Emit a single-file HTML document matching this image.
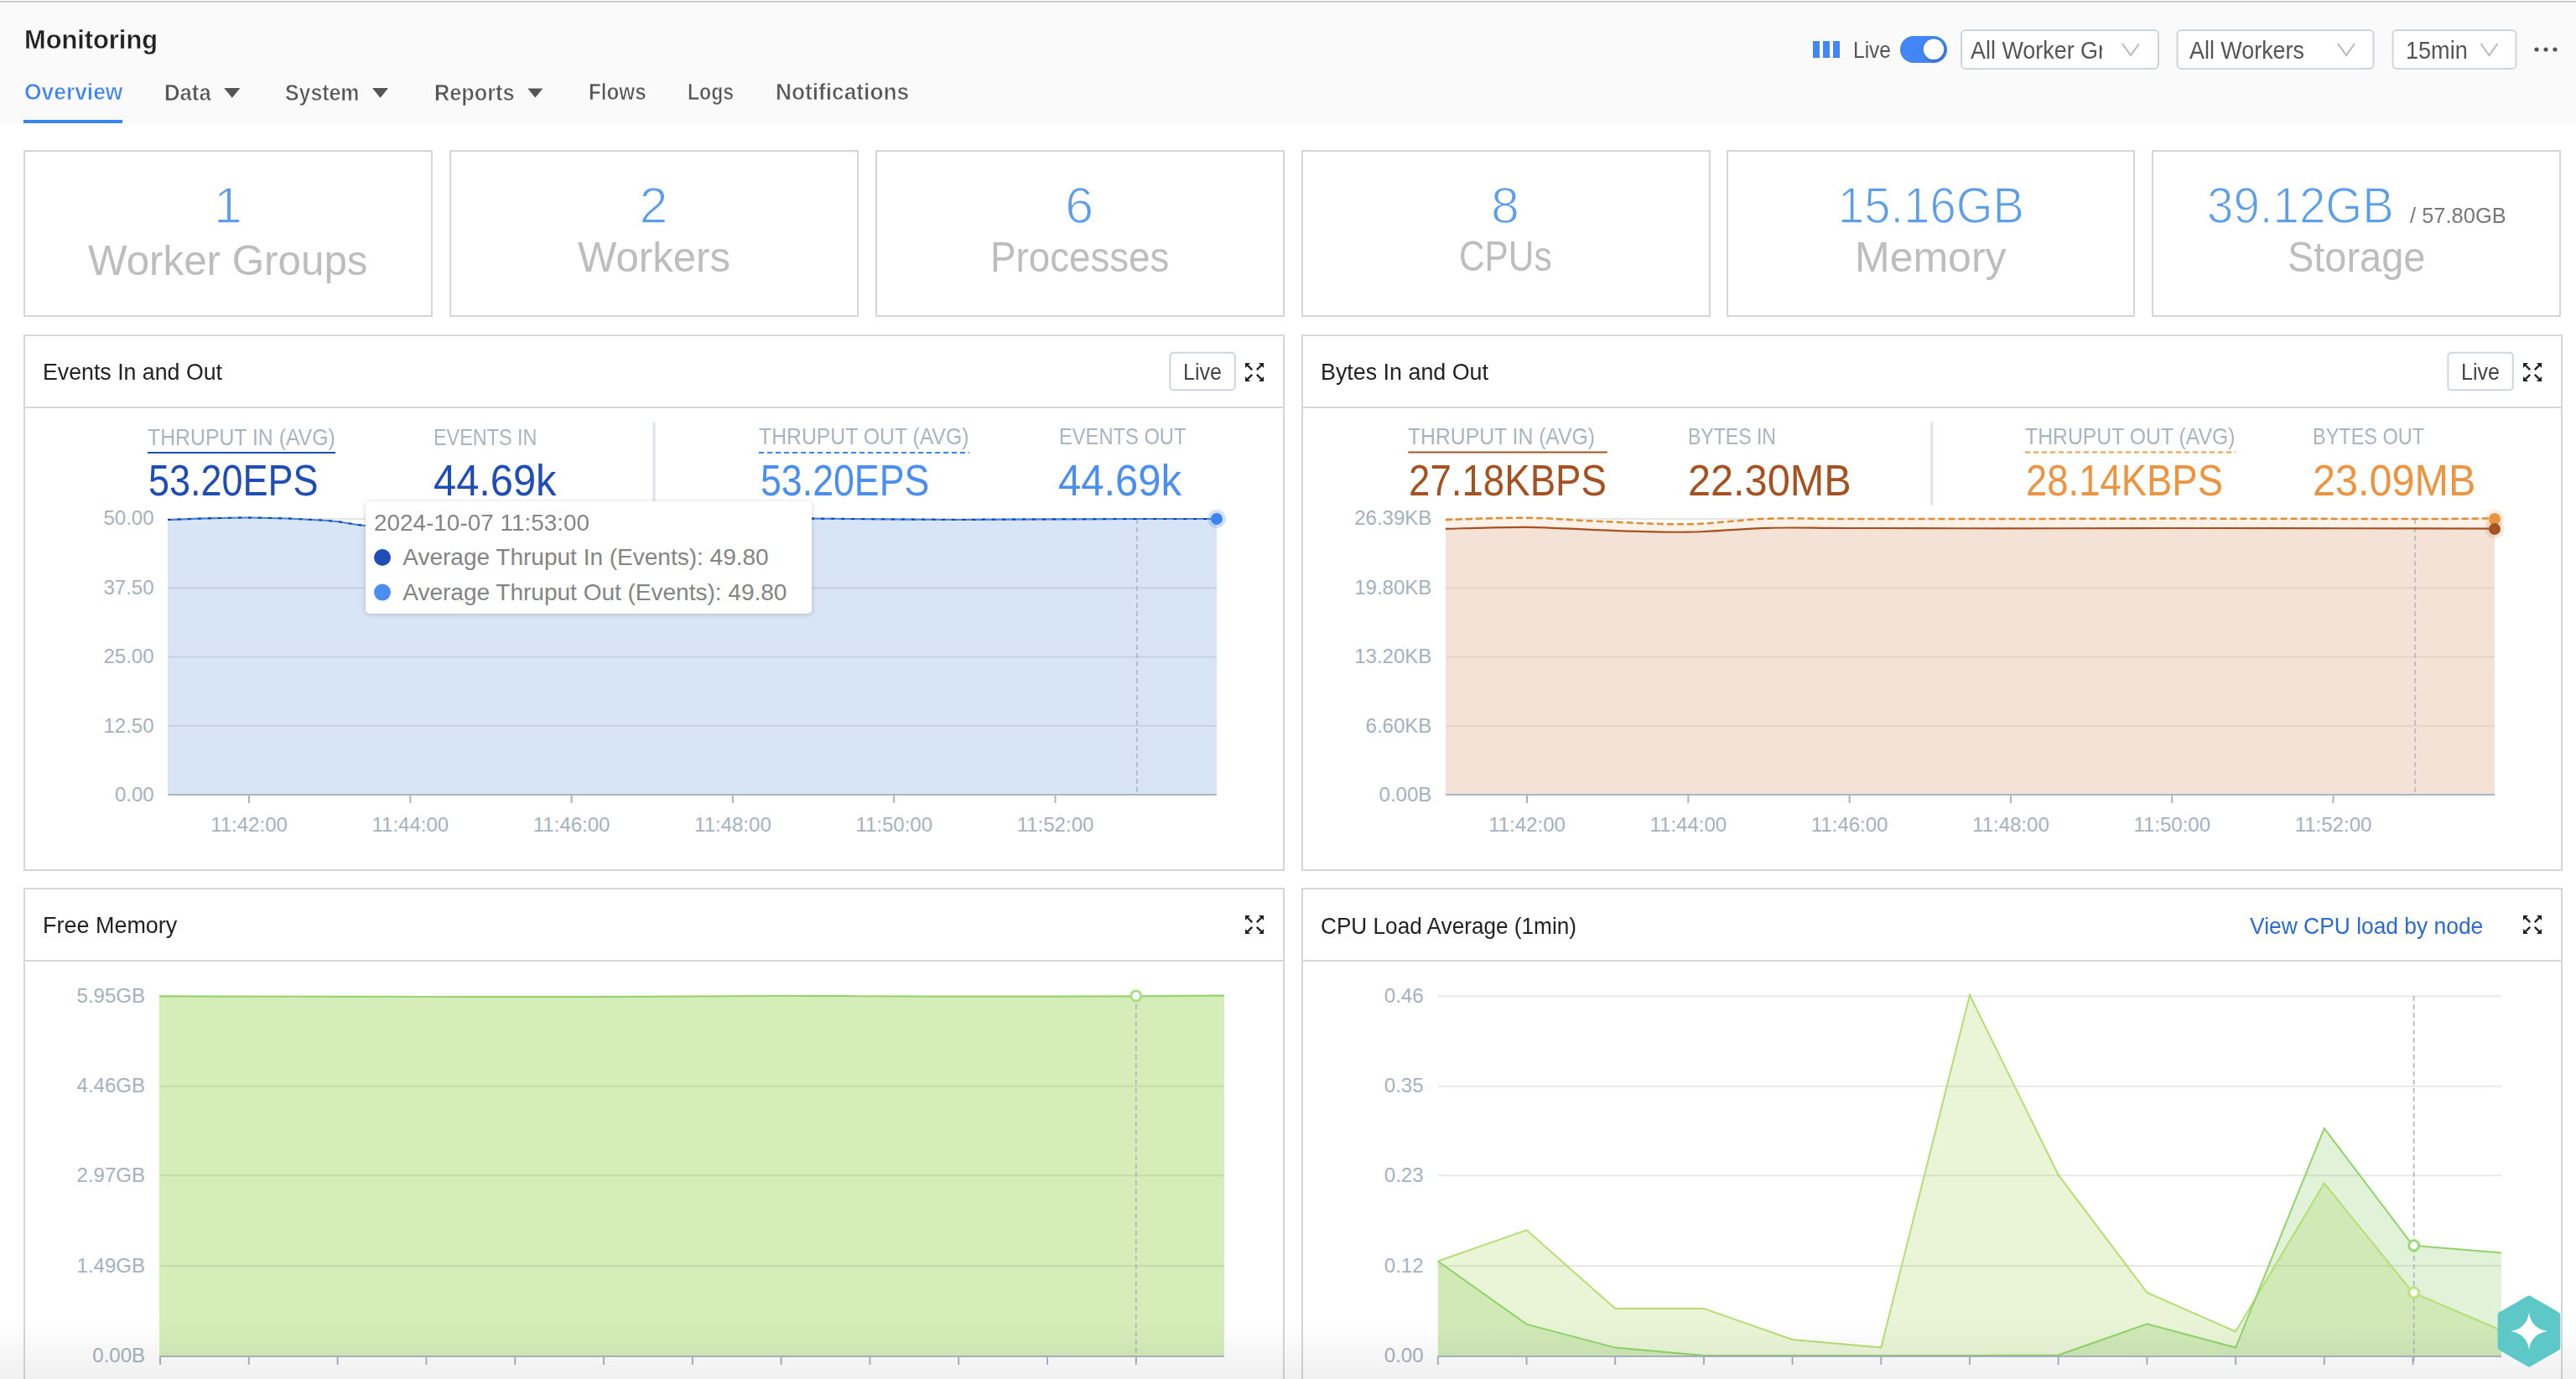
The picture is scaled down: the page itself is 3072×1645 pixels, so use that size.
<!DOCTYPE html>
<html><head><meta charset="utf-8"><title>Monitoring</title>
<style>
html,body{margin:0;padding:0;width:3072px;height:1645px;overflow:hidden;background:#fff}
body{position:relative;font-family:"Liberation Sans",sans-serif}
.s{position:absolute;left:0;top:0}
.t{position:absolute;white-space:pre}
.tip{position:absolute;left:436px;top:598px;width:532px;height:134px;background:#fff;border-radius:5px;box-shadow:0 1px 6px rgba(0,0,0,0.18)}
.fade{position:absolute;left:0;top:1575px;width:3072px;height:70px;background:linear-gradient(to bottom,rgba(0,0,0,0),rgba(0,0,0,0.06))}
</style></head><body>
<svg class="s" width="3072" height="1645" viewBox="0 0 3072 1645"><rect x="0" y="0" width="3072" height="147" fill="#fafafa"/><rect x="0" y="0" width="3072" height="1" fill="#fff"/><rect x="0" y="1" width="3072" height="2" fill="#c9cacc"/><rect x="0" y="3" width="3072" height="1" fill="#fff"/><rect x="28" y="143" width="118" height="4" fill="#3b82f6"/><polygon points="267.2,105 286.4,105 276.79999999999995,116.8" fill="#555"/><polygon points="444,105 463,105 453.5,116.8" fill="#555"/><polygon points="629.3,105.5 647.4,105.5 638.3499999999999,116.4" fill="#555"/><rect x="2162" y="49" width="8" height="20" fill="#4285f4"/><rect x="2174" y="49" width="8" height="20" fill="#4285f4"/><rect x="2186" y="49" width="8" height="20" fill="#4285f4"/><rect x="2266" y="43" width="56" height="32" rx="16" fill="#4285f4"/><defs><filter id="ks" x="-50%" y="-50%" width="200%" height="200%"><feDropShadow dx="1.5" dy="2" stdDeviation="2" flood-color="#000" flood-opacity="0.25"/></filter></defs><circle cx="2306" cy="58.8" r="12.2" fill="#fff" filter="url(#ks)"/><rect x="2339" y="36" width="235" height="46" rx="5" fill="#fff" stroke="#ccd5de" stroke-width="2"/><rect x="2596.5" y="36" width="234" height="46" rx="5" fill="#fff" stroke="#ccd5de" stroke-width="2"/><rect x="2853.5" y="36" width="147" height="46" rx="5" fill="#fff" stroke="#ccd5de" stroke-width="2"/><polyline points="2531,52 2541,66 2551,52" fill="none" stroke="#b8b8b8" stroke-width="2"/><polyline points="2788,52 2798,66 2808,52" fill="none" stroke="#b8b8b8" stroke-width="2"/><polyline points="2958.5,52 2968.5,66 2978.5,52" fill="none" stroke="#b8b8b8" stroke-width="2"/><circle cx="3025" cy="59" r="2.6" fill="#555"/><circle cx="3036" cy="59" r="2.6" fill="#555"/><circle cx="3047" cy="59" r="2.6" fill="#555"/><rect x="29" y="180" width="486" height="197" fill="#fff" stroke="#d6d6d6" stroke-width="2"/><rect x="537" y="180" width="486" height="197" fill="#fff" stroke="#d6d6d6" stroke-width="2"/><rect x="1045" y="180" width="486" height="197" fill="#fff" stroke="#d6d6d6" stroke-width="2"/><rect x="1553" y="180" width="486" height="197" fill="#fff" stroke="#d6d6d6" stroke-width="2"/><rect x="2060" y="180" width="485" height="197" fill="#fff" stroke="#d6d6d6" stroke-width="2"/><rect x="2567" y="180" width="486" height="197" fill="#fff" stroke="#d6d6d6" stroke-width="2"/><rect x="29" y="400" width="1502" height="638" fill="#fff" stroke="#d6d6d6" stroke-width="2"/><rect x="28" y="485" width="1504" height="2" fill="#d6d6d6"/><rect x="1553" y="400" width="1502" height="638" fill="#fff" stroke="#d6d6d6" stroke-width="2"/><rect x="1552" y="485" width="1504" height="2" fill="#d6d6d6"/><rect x="29" y="1060" width="1502" height="698" fill="#fff" stroke="#d6d6d6" stroke-width="2"/><rect x="28" y="1145" width="1504" height="2" fill="#d6d6d6"/><rect x="1553" y="1060" width="1502" height="698" fill="#fff" stroke="#d6d6d6" stroke-width="2"/><rect x="1552" y="1145" width="1504" height="2" fill="#d6d6d6"/><g transform="translate(1485,433)" fill="#222" stroke="#222"><path d="M0 0 L6 0 L0 6 Z" stroke="none"/><path d="M22 0 L16 0 L22 6 Z" stroke="none"/><path d="M0 22 L6 22 L0 16 Z" stroke="none"/><path d="M22 22 L16 22 L22 16 Z" stroke="none"/><path d="M2.5 2.5 L8.2 8.2 M19.5 2.5 L13.8 8.2 M2.5 19.5 L8.2 13.8 M19.5 19.5 L13.8 13.8" stroke-width="2.4" fill="none"/></g><g transform="translate(3009,433)" fill="#222" stroke="#222"><path d="M0 0 L6 0 L0 6 Z" stroke="none"/><path d="M22 0 L16 0 L22 6 Z" stroke="none"/><path d="M0 22 L6 22 L0 16 Z" stroke="none"/><path d="M22 22 L16 22 L22 16 Z" stroke="none"/><path d="M2.5 2.5 L8.2 8.2 M19.5 2.5 L13.8 8.2 M2.5 19.5 L8.2 13.8 M19.5 19.5 L13.8 13.8" stroke-width="2.4" fill="none"/></g><g transform="translate(1485,1092)" fill="#222" stroke="#222"><path d="M0 0 L6 0 L0 6 Z" stroke="none"/><path d="M22 0 L16 0 L22 6 Z" stroke="none"/><path d="M0 22 L6 22 L0 16 Z" stroke="none"/><path d="M22 22 L16 22 L22 16 Z" stroke="none"/><path d="M2.5 2.5 L8.2 8.2 M19.5 2.5 L13.8 8.2 M2.5 19.5 L8.2 13.8 M19.5 19.5 L13.8 13.8" stroke-width="2.4" fill="none"/></g><g transform="translate(3009,1092)" fill="#222" stroke="#222"><path d="M0 0 L6 0 L0 6 Z" stroke="none"/><path d="M22 0 L16 0 L22 6 Z" stroke="none"/><path d="M0 22 L6 22 L0 16 Z" stroke="none"/><path d="M22 22 L16 22 L22 16 Z" stroke="none"/><path d="M2.5 2.5 L8.2 8.2 M19.5 2.5 L13.8 8.2 M2.5 19.5 L8.2 13.8 M19.5 19.5 L13.8 13.8" stroke-width="2.4" fill="none"/></g><rect x="1395.3" y="420.7" width="77.4" height="44.6" rx="4" fill="#fff" stroke="#ccd5de" stroke-width="2"/><rect x="2919.4" y="420.7" width="77.4" height="44.6" rx="4" fill="#fff" stroke="#ccd5de" stroke-width="2"/><rect x="778.5" y="503.5" width="3" height="97" fill="#dde3e9"/><rect x="2302.3" y="503.5" width="3" height="99" fill="#dde3e9"/><rect x="176" y="539" width="224" height="2" fill="#1e4db6"/><line x1="905" y1="540" x2="1156" y2="540" stroke="#3b82f6" stroke-width="2" stroke-dasharray="6 4"/><rect x="1679.3" y="538.5" width="237.4" height="2" fill="#a65121"/><line x1="2415" y1="539.5" x2="2666" y2="539.5" stroke="#ef9a45" stroke-width="2" stroke-dasharray="6 4"/><rect x="200" y="618" width="1251" height="2" fill="#e6e6e6"/><path d="M200.0 620.0 C216.2 619.6 265.3 617.3 297.0 617.5 C328.7 617.7 366.8 619.4 390.0 621.0 C413.2 622.6 419.5 625.8 436.0 627.0 C452.5 628.2 464.2 629.2 489.0 628.0 C513.8 626.8 553.0 621.5 585.0 620.0 C617.0 618.5 633.0 619.2 681.0 619.0 C729.0 618.8 825.2 619.1 873.0 619.0 C920.8 618.9 936.8 618.5 968.0 618.6 C999.2 618.7 1030.5 619.2 1060.0 619.4 C1089.5 619.6 1122.7 620.0 1145.0 620.0 C1167.3 620.0 1158.8 619.9 1194.0 619.7 C1229.2 619.5 1313.2 619.1 1356.0 619.0 C1398.8 618.9 1435.2 619.0 1451.0 619.0 L1451 948 L200 948 Z" fill="#d8e5f7"/><rect x="200" y="700.3" width="1251" height="2" fill="#c7d2e2"/><rect x="200" y="782.6" width="1251" height="2" fill="#c7d2e2"/><rect x="200" y="864.9" width="1251" height="2" fill="#c7d2e2"/><line x1="1356" y1="619" x2="1356" y2="948" stroke="#a9b1bb" stroke-width="1.5" stroke-dasharray="6 4"/><path d="M200.0 620.0 C216.2 619.6 265.3 617.3 297.0 617.5 C328.7 617.7 366.8 619.4 390.0 621.0 C413.2 622.6 419.5 625.8 436.0 627.0 C452.5 628.2 464.2 629.2 489.0 628.0 C513.8 626.8 553.0 621.5 585.0 620.0 C617.0 618.5 633.0 619.2 681.0 619.0 C729.0 618.8 825.2 619.1 873.0 619.0 C920.8 618.9 936.8 618.5 968.0 618.6 C999.2 618.7 1030.5 619.2 1060.0 619.4 C1089.5 619.6 1122.7 620.0 1145.0 620.0 C1167.3 620.0 1158.8 619.9 1194.0 619.7 C1229.2 619.5 1313.2 619.1 1356.0 619.0 C1398.8 618.9 1435.2 619.0 1451.0 619.0" fill="none" stroke="#3d84f0" stroke-width="2.2"/><path d="M200.0 620.0 C216.2 619.6 265.3 617.3 297.0 617.5 C328.7 617.7 366.8 619.4 390.0 621.0 C413.2 622.6 419.5 625.8 436.0 627.0 C452.5 628.2 464.2 629.2 489.0 628.0 C513.8 626.8 553.0 621.5 585.0 620.0 C617.0 618.5 633.0 619.2 681.0 619.0 C729.0 618.8 825.2 619.1 873.0 619.0 C920.8 618.9 936.8 618.5 968.0 618.6 C999.2 618.7 1030.5 619.2 1060.0 619.4 C1089.5 619.6 1122.7 620.0 1145.0 620.0 C1167.3 620.0 1158.8 619.9 1194.0 619.7 C1229.2 619.5 1313.2 619.1 1356.0 619.0 C1398.8 618.9 1435.2 619.0 1451.0 619.0" fill="none" stroke="#1e3f8a" stroke-width="2" stroke-dasharray="4 8"/><rect x="200" y="947" width="1251" height="2" fill="#a9b5c2"/><rect x="296.0" y="948" width="2" height="10" fill="#a9b5c2"/><rect x="488.3" y="948" width="2" height="10" fill="#a9b5c2"/><rect x="680.6" y="948" width="2" height="10" fill="#a9b5c2"/><rect x="872.9" y="948" width="2" height="10" fill="#a9b5c2"/><rect x="1065.2" y="948" width="2" height="10" fill="#a9b5c2"/><rect x="1257.5" y="948" width="2" height="10" fill="#a9b5c2"/><circle cx="1451" cy="619" r="11" fill="#4a8ff0" fill-opacity="0.25"/><circle cx="1451" cy="619" r="7" fill="#3d84f0"/><rect x="1724" y="618" width="1251" height="2" fill="#e6e6e6"/><path d="M1724.0 620.0 C1740.2 619.6 1790.2 617.4 1821.0 617.7 C1851.8 618.0 1877.0 620.8 1909.0 622.0 C1941.0 623.2 1979.8 625.8 2013.0 625.2 C2046.2 624.7 2076.0 619.7 2108.0 618.7 C2140.0 617.7 2156.3 619.0 2205.0 619.0 C2253.7 619.0 2334.2 619.1 2400.0 619.0 C2465.8 618.9 2520.0 618.6 2600.0 618.6 C2680.0 618.6 2817.5 619.0 2880.0 619.0 C2942.5 619.0 2959.2 618.4 2975.0 618.3 L2975 948 L1724 948 Z" fill="#fdf1e8"/><path d="M1724.0 630.8 C1740.2 630.5 1790.2 628.5 1821.0 628.8 C1851.8 629.1 1877.0 631.4 1909.0 632.4 C1941.0 633.4 1979.8 635.1 2013.0 634.7 C2046.2 634.3 2076.0 630.6 2108.0 629.8 C2140.0 629.0 2156.3 629.9 2205.0 630.0 C2253.7 630.1 2334.2 630.3 2400.0 630.3 C2465.8 630.3 2520.0 630.0 2600.0 630.0 C2680.0 630.0 2817.5 630.3 2880.0 630.4 C2942.5 630.5 2959.2 630.7 2975.0 630.7 L2975 948 L1724 948 Z" fill="#f5e2d7"/><rect x="1724" y="700.3" width="1251" height="2" fill="#e6d4c9"/><rect x="1724" y="782.6" width="1251" height="2" fill="#e6d4c9"/><rect x="1724" y="864.9" width="1251" height="2" fill="#e6d4c9"/><line x1="2880" y1="619" x2="2880" y2="948" stroke="#a9b5c2" stroke-width="1.5" stroke-dasharray="6 4"/><path d="M1724.0 620.0 C1740.2 619.6 1790.2 617.4 1821.0 617.7 C1851.8 618.0 1877.0 620.8 1909.0 622.0 C1941.0 623.2 1979.8 625.8 2013.0 625.2 C2046.2 624.7 2076.0 619.7 2108.0 618.7 C2140.0 617.7 2156.3 619.0 2205.0 619.0 C2253.7 619.0 2334.2 619.1 2400.0 619.0 C2465.8 618.9 2520.0 618.6 2600.0 618.6 C2680.0 618.6 2817.5 619.0 2880.0 619.0 C2942.5 619.0 2959.2 618.4 2975.0 618.3" fill="none" stroke="#e28c32" stroke-width="2.5" stroke-dasharray="8 4"/><path d="M1724.0 630.8 C1740.2 630.5 1790.2 628.5 1821.0 628.8 C1851.8 629.1 1877.0 631.4 1909.0 632.4 C1941.0 633.4 1979.8 635.1 2013.0 634.7 C2046.2 634.3 2076.0 630.6 2108.0 629.8 C2140.0 629.0 2156.3 629.9 2205.0 630.0 C2253.7 630.1 2334.2 630.3 2400.0 630.3 C2465.8 630.3 2520.0 630.0 2600.0 630.0 C2680.0 630.0 2817.5 630.3 2880.0 630.4 C2942.5 630.5 2959.2 630.7 2975.0 630.7" fill="none" stroke="#a65121" stroke-width="2.2"/><rect x="1724" y="947" width="1251" height="2" fill="#a9b5c2"/><rect x="1820.0" y="948" width="2" height="10" fill="#a9b5c2"/><rect x="2012.3" y="948" width="2" height="10" fill="#a9b5c2"/><rect x="2204.6" y="948" width="2" height="10" fill="#a9b5c2"/><rect x="2396.9" y="948" width="2" height="10" fill="#a9b5c2"/><rect x="2589.2" y="948" width="2" height="10" fill="#a9b5c2"/><rect x="2781.5" y="948" width="2" height="10" fill="#a9b5c2"/><circle cx="2975" cy="619" r="11.5" fill="#ef9a45" fill-opacity="0.15"/><circle cx="2975" cy="631" r="11.5" fill="#a65121" fill-opacity="0.12"/><circle cx="2975" cy="619" r="7" fill="#ea9440"/><circle cx="2975" cy="631" r="7" fill="#a4541f"/><path d="M190.0 1188.4 C225.0 1188.5 315.0 1188.7 400.0 1188.8 C485.0 1188.9 611.7 1189.3 700.0 1189.2 C788.3 1189.1 863.3 1188.1 930.0 1188.0 C996.7 1187.9 1029.2 1188.5 1100.0 1188.6 C1170.8 1188.7 1295.0 1188.6 1355.0 1188.4 C1415.0 1188.2 1442.5 1187.7 1460.0 1187.6 L1460 1618 L190 1618 Z" fill="#d4edb9"/><rect x="190" y="1294.8" width="1270" height="2" fill="#c3dcae"/><rect x="190" y="1401.2" width="1270" height="2" fill="#c3dcae"/><rect x="190" y="1509.0" width="1270" height="2" fill="#c3dcae"/><line x1="1354.8" y1="1188" x2="1354.8" y2="1628" stroke="#a9b1bb" stroke-width="1.5" stroke-dasharray="6 4"/><path d="M190.0 1188.4 C225.0 1188.5 315.0 1188.7 400.0 1188.8 C485.0 1188.9 611.7 1189.3 700.0 1189.2 C788.3 1189.1 863.3 1188.1 930.0 1188.0 C996.7 1187.9 1029.2 1188.5 1100.0 1188.6 C1170.8 1188.7 1295.0 1188.6 1355.0 1188.4 C1415.0 1188.2 1442.5 1187.7 1460.0 1187.6" fill="none" stroke="#96d46d" stroke-width="2.2"/><rect x="190" y="1617" width="1270" height="2" fill="#a9b5c2"/><rect x="190.0" y="1618" width="2" height="10" fill="#a9b5c2"/><rect x="295.8" y="1618" width="2" height="10" fill="#a9b5c2"/><rect x="401.6" y="1618" width="2" height="10" fill="#a9b5c2"/><rect x="507.4" y="1618" width="2" height="10" fill="#a9b5c2"/><rect x="613.2" y="1618" width="2" height="10" fill="#a9b5c2"/><rect x="719.0" y="1618" width="2" height="10" fill="#a9b5c2"/><rect x="824.8" y="1618" width="2" height="10" fill="#a9b5c2"/><rect x="930.6" y="1618" width="2" height="10" fill="#a9b5c2"/><rect x="1036.4" y="1618" width="2" height="10" fill="#a9b5c2"/><rect x="1142.2" y="1618" width="2" height="10" fill="#a9b5c2"/><rect x="1248.0" y="1618" width="2" height="10" fill="#a9b5c2"/><rect x="1353.8" y="1618" width="2" height="10" fill="#a9b5c2"/><circle cx="1354.8" cy="1188" r="6" fill="#fff" stroke="#a8df7c" stroke-width="3"/><rect x="1714.8" y="1187.4" width="1268.2" height="2" fill="#e8e8e8"/><rect x="1714.8" y="1294.8" width="1268.2" height="2" fill="#e8e8e8"/><rect x="1714.8" y="1401.2" width="1268.2" height="2" fill="#e8e8e8"/><rect x="1714.8" y="1509.0" width="1268.2" height="2" fill="#e8e8e8"/><path d="M1714.8 1504.5 L1820.5 1467.3 L1926.2 1561.0 L2031.9 1561.0 L2137.6 1598.0 L2243.3 1607.5 L2349.0 1187.2 L2454.7 1401.6 L2560.4 1541.9 L2666.1 1588.5 L2771.8 1411.6 L2877.5 1541.9 L2983.0 1587.0 L2983 1618 L1714.8 1618 Z" fill="#96c832" fill-opacity="0.2"/><path d="M1714.8 1504.5 L1820.5 1579.6 L1926.2 1607.6 L2031.9 1617.0 L2137.6 1617.0 L2243.3 1617.0 L2349.0 1617.0 L2454.7 1616.5 L2560.4 1579.4 L2666.1 1607.5 L2771.8 1346.0 L2877.5 1485.8 L2983.0 1494.4 L2983 1618 L1714.8 1618 Z" fill="#69be3c" fill-opacity="0.2"/><line x1="2878.7" y1="1188" x2="2878.7" y2="1628" stroke="#a9b1bb" stroke-width="1.5" stroke-dasharray="6 4"/><path d="M1714.8 1504.5 L1820.5 1467.3 L1926.2 1561.0 L2031.9 1561.0 L2137.6 1598.0 L2243.3 1607.5 L2349.0 1187.2 L2454.7 1401.6 L2560.4 1541.9 L2666.1 1588.5 L2771.8 1411.6 L2877.5 1541.9 L2983.0 1587.0" fill="none" stroke="#b3df72" stroke-width="2"/><path d="M1714.8 1504.5 L1820.5 1579.6 L1926.2 1607.6 L2031.9 1617.0 L2137.6 1617.0 L2243.3 1617.0 L2349.0 1617.0 L2454.7 1616.5 L2560.4 1579.4 L2666.1 1607.5 L2771.8 1346.0 L2877.5 1485.8 L2983.0 1494.4" fill="none" stroke="#8dd568" stroke-width="2"/><rect x="1714.8" y="1617" width="1268.2" height="2" fill="#a9b5c2"/><rect x="1713.8" y="1618" width="2" height="10" fill="#a9b5c2"/><rect x="1819.5" y="1618" width="2" height="10" fill="#a9b5c2"/><rect x="1925.2" y="1618" width="2" height="10" fill="#a9b5c2"/><rect x="2030.9" y="1618" width="2" height="10" fill="#a9b5c2"/><rect x="2136.6" y="1618" width="2" height="10" fill="#a9b5c2"/><rect x="2242.3" y="1618" width="2" height="10" fill="#a9b5c2"/><rect x="2348.0" y="1618" width="2" height="10" fill="#a9b5c2"/><rect x="2453.7" y="1618" width="2" height="10" fill="#a9b5c2"/><rect x="2559.4" y="1618" width="2" height="10" fill="#a9b5c2"/><rect x="2665.1" y="1618" width="2" height="10" fill="#a9b5c2"/><rect x="2770.8" y="1618" width="2" height="10" fill="#a9b5c2"/><rect x="2876.5" y="1618" width="2" height="10" fill="#a9b5c2"/><circle cx="2878.7" cy="1485.8" r="6" fill="#fff" stroke="#9ad96f" stroke-width="3"/><circle cx="2878.7" cy="1541.9" r="6" fill="#fff" stroke="#c0e27f" stroke-width="3"/></svg>
<div class="tip"></div>
<svg class="s" width="3072" height="1645" viewBox="0 0 3072 1645"><circle cx="456" cy="665" r="10" fill="#1e4db6"/><circle cx="456" cy="706.6" r="10" fill="#4a8ff0"/></svg>
<div class="t" style="left:29.0px;top:31.0px;font-size:32px;line-height:32px;color:#222;font-weight:700;transform:scaleX(0.9620);transform-origin:0 0;-webkit-text-stroke:0.4px #fafafa;">Monitoring</div>
<div class="t" style="left:28.5px;top:95.7px;font-size:28px;line-height:28px;color:#3b82f6;font-weight:700;transform:scaleX(0.9427);transform-origin:0 0;-webkit-text-stroke:0.7px #fafafa;">Overview</div>
<div class="t" style="left:196.0px;top:96.8px;font-size:28px;line-height:28px;color:#555;font-weight:700;transform:scaleX(0.9176);transform-origin:0 0;-webkit-text-stroke:0.7px #fafafa;">Data</div>
<div class="t" style="left:340.4px;top:97.0px;font-size:28px;line-height:28px;color:#555;font-weight:700;transform:scaleX(0.8873);transform-origin:0 0;-webkit-text-stroke:0.7px #fafafa;">System</div>
<div class="t" style="left:517.9px;top:97.3px;font-size:28px;line-height:28px;color:#555;font-weight:700;transform:scaleX(0.9027);transform-origin:0 0;-webkit-text-stroke:0.7px #fafafa;">Reports</div>
<div class="t" style="left:701.5px;top:95.7px;font-size:28px;line-height:28px;color:#555;font-weight:700;transform:scaleX(0.8659);transform-origin:0 0;-webkit-text-stroke:0.7px #fafafa;">Flows</div>
<div class="t" style="left:820.3px;top:95.7px;font-size:28px;line-height:28px;color:#555;font-weight:700;transform:scaleX(0.8252);transform-origin:0 0;-webkit-text-stroke:0.7px #fafafa;">Logs</div>
<div class="t" style="left:925.1px;top:95.7px;font-size:28px;line-height:28px;color:#555;font-weight:700;transform:scaleX(0.9383);transform-origin:0 0;-webkit-text-stroke:0.7px #fafafa;">Notifications</div>
<div class="t" style="left:2210.0px;top:45.6px;font-size:27.5px;line-height:27.5px;color:#555;transform:scaleX(0.8919);transform-origin:0 0;">Live</div>
<div class="t" style="left:2350.0px;top:45.4px;font-size:30px;line-height:30px;color:#555;transform:scaleX(0.8971);transform-origin:0 0;width:175.0px;overflow:hidden;">All Worker Gr</div>
<div class="t" style="left:2611.0px;top:45.4px;font-size:30px;line-height:30px;color:#555;transform:scaleX(0.8965);transform-origin:0 0;">All Workers</div>
<div class="t" style="left:2868.8px;top:45.4px;font-size:30px;line-height:30px;color:#555;transform:scaleX(0.9019);transform-origin:0 0;">15min</div>
<div class="t" style="left:254.9px;top:215.0px;font-size:61px;line-height:61px;color:#5b9ee9;-webkit-text-stroke:1.4px #fff;">1</div>
<div class="t" style="left:105.1px;top:286.2px;font-size:50px;line-height:50px;color:#bdbdbd;transform:scaleX(0.9865);transform-origin:0 0;">Worker Groups</div>
<div class="t" style="left:762.5px;top:215.0px;font-size:61px;line-height:61px;color:#5b9ee9;-webkit-text-stroke:1.4px #fff;">2</div>
<div class="t" style="left:688.5px;top:281.9px;font-size:50px;line-height:50px;color:#bdbdbd;transform:scaleX(0.9826);transform-origin:0 0;">Workers</div>
<div class="t" style="left:1270.2px;top:215.0px;font-size:61px;line-height:61px;color:#5b9ee9;-webkit-text-stroke:1.4px #fff;">6</div>
<div class="t" style="left:1180.5px;top:281.9px;font-size:50px;line-height:50px;color:#bdbdbd;transform:scaleX(0.9142);transform-origin:0 0;">Processes</div>
<div class="t" style="left:1777.9px;top:215.0px;font-size:61px;line-height:61px;color:#5b9ee9;-webkit-text-stroke:1.4px #fff;">8</div>
<div class="t" style="left:1739.5px;top:281.3px;font-size:50px;line-height:50px;color:#bdbdbd;transform:scaleX(0.8470);transform-origin:0 0;">CPUs</div>
<div class="t" style="left:2191.5px;top:215.0px;font-size:61px;line-height:61px;color:#5b9ee9;transform:scaleX(0.9219);transform-origin:0 0;-webkit-text-stroke:1.4px #fff;">15.16GB</div>
<div class="t" style="left:2212.0px;top:281.9px;font-size:50px;line-height:50px;color:#bdbdbd;">Memory</div>
<div class="t" style="left:2632.0px;top:214.8px;font-size:61px;line-height:61px;color:#5b9ee9;transform:scaleX(0.9261);transform-origin:0 0;-webkit-text-stroke:1.4px #fff;">39.12GB</div>
<div class="t" style="left:2873.7px;top:243.7px;font-size:26px;line-height:26px;color:#777;transform:scaleX(0.9797);transform-origin:0 0;">/ 57.80GB</div>
<div class="t" style="left:2728.0px;top:281.5px;font-size:50px;line-height:50px;color:#bdbdbd;transform:scaleX(0.9388);transform-origin:0 0;">Storage</div>
<div class="t" style="left:50.6px;top:429.9px;font-size:27.5px;line-height:27.5px;color:#222;transform:scaleX(0.9721);transform-origin:0 0;">Events In and Out</div>
<div class="t" style="left:176.0px;top:507.6px;font-size:27.5px;line-height:27.5px;color:#a7b4c1;transform:scaleX(0.9020);transform-origin:0 0;">THRUPUT IN (AVG)</div>
<div class="t" style="left:177.0px;top:548.4px;font-size:51px;line-height:51px;color:#1e4db6;transform:scaleX(0.8816);transform-origin:0 0;">53.20EPS</div>
<div class="t" style="left:517.0px;top:507.6px;font-size:27.5px;line-height:27.5px;color:#a7b4c1;transform:scaleX(0.8500);transform-origin:0 0;">EVENTS IN</div>
<div class="t" style="left:516.5px;top:548.0px;font-size:51px;line-height:51px;color:#1e4db6;transform:scaleX(0.9567);transform-origin:0 0;">44.69k</div>
<div class="t" style="left:905.3px;top:507.4px;font-size:27.5px;line-height:27.5px;color:#a7b4c1;transform:scaleX(0.9005);transform-origin:0 0;">THRUPUT OUT (AVG)</div>
<div class="t" style="left:906.9px;top:548.0px;font-size:51px;line-height:51px;color:#4a8ff0;transform:scaleX(0.8764);transform-origin:0 0;">53.20EPS</div>
<div class="t" style="left:1262.6px;top:507.4px;font-size:27.5px;line-height:27.5px;color:#a7b4c1;transform:scaleX(0.8616);transform-origin:0 0;">EVENTS OUT</div>
<div class="t" style="left:1261.7px;top:548.0px;font-size:51px;line-height:51px;color:#4a8ff0;transform:scaleX(0.9593);transform-origin:0 0;">44.69k</div>
<div class="t" style="left:1411.0px;top:430.7px;font-size:27px;line-height:27px;color:#444;transform:scaleX(0.9287);transform-origin:0 0;">Live</div>
<div class="t" style="left:1575.4px;top:429.6px;font-size:27.5px;line-height:27.5px;color:#222;transform:scaleX(0.9764);transform-origin:0 0;">Bytes In and Out</div>
<div class="t" style="left:1679.3px;top:507.4px;font-size:27.5px;line-height:27.5px;color:#a7b4c1;transform:scaleX(0.8991);transform-origin:0 0;">THRUPUT IN (AVG)</div>
<div class="t" style="left:1680.0px;top:548.0px;font-size:51px;line-height:51px;color:#a65220;transform:scaleX(0.8949);transform-origin:0 0;">27.18KBPS</div>
<div class="t" style="left:2013.0px;top:507.4px;font-size:27.5px;line-height:27.5px;color:#a7b4c1;transform:scaleX(0.8379);transform-origin:0 0;">BYTES IN</div>
<div class="t" style="left:2013.0px;top:547.9px;font-size:51px;line-height:51px;color:#a65220;transform:scaleX(0.9538);transform-origin:0 0;">22.30MB</div>
<div class="t" style="left:2415.0px;top:507.4px;font-size:27.5px;line-height:27.5px;color:#a7b4c1;transform:scaleX(0.9009);transform-origin:0 0;">THRUPUT OUT (AVG)</div>
<div class="t" style="left:2416.0px;top:548.0px;font-size:51px;line-height:51px;color:#ec9440;transform:scaleX(0.8912);transform-origin:0 0;">28.14KBPS</div>
<div class="t" style="left:2757.5px;top:507.4px;font-size:27.5px;line-height:27.5px;color:#a7b4c1;transform:scaleX(0.8533);transform-origin:0 0;">BYTES OUT</div>
<div class="t" style="left:2757.5px;top:547.9px;font-size:51px;line-height:51px;color:#ec9440;transform:scaleX(0.9519);transform-origin:0 0;">23.09MB</div>
<div class="t" style="left:2935.0px;top:430.7px;font-size:27px;line-height:27px;color:#444;transform:scaleX(0.9287);transform-origin:0 0;">Live</div>
<div class="t" style="left:50.8px;top:1090.0px;font-size:27.5px;line-height:27.5px;color:#222;transform:scaleX(0.9804);transform-origin:0 0;">Free Memory</div>
<div class="t" style="left:1574.5px;top:1090.5px;font-size:27.5px;line-height:27.5px;color:#222;transform:scaleX(0.9516);transform-origin:0 0;">CPU Load Average (1min)</div>
<div class="t" style="left:2683.2px;top:1090.5px;font-size:27.5px;line-height:27.5px;color:#2a6ad5;transform:scaleX(0.9598);transform-origin:0 0;">View CPU load by node</div>
<div class="t" style="left:123.5px;top:606.2px;font-size:24px;line-height:24px;color:#a4b1be;">50.00</div>
<div class="t" style="left:123.5px;top:688.9px;font-size:24px;line-height:24px;color:#a4b1be;">37.50</div>
<div class="t" style="left:123.5px;top:771.2px;font-size:24px;line-height:24px;color:#a4b1be;">25.00</div>
<div class="t" style="left:123.5px;top:853.5px;font-size:24px;line-height:24px;color:#a4b1be;">12.50</div>
<div class="t" style="left:136.9px;top:935.6px;font-size:24px;line-height:24px;color:#a4b1be;">0.00</div>
<div class="t" style="left:1615.2px;top:606.2px;font-size:24px;line-height:24px;color:#a4b1be;">26.39KB</div>
<div class="t" style="left:1615.2px;top:688.9px;font-size:24px;line-height:24px;color:#a4b1be;">19.80KB</div>
<div class="t" style="left:1615.2px;top:771.2px;font-size:24px;line-height:24px;color:#a4b1be;">13.20KB</div>
<div class="t" style="left:1628.6px;top:853.5px;font-size:24px;line-height:24px;color:#a4b1be;">6.60KB</div>
<div class="t" style="left:1644.6px;top:935.6px;font-size:24px;line-height:24px;color:#a4b1be;">0.00B</div>
<div class="t" style="left:91.6px;top:1176.0px;font-size:24px;line-height:24px;color:#a4b1be;">5.95GB</div>
<div class="t" style="left:91.6px;top:1283.4px;font-size:24px;line-height:24px;color:#a4b1be;">4.46GB</div>
<div class="t" style="left:91.6px;top:1389.8px;font-size:24px;line-height:24px;color:#a4b1be;">2.97GB</div>
<div class="t" style="left:91.6px;top:1497.6px;font-size:24px;line-height:24px;color:#a4b1be;">1.49GB</div>
<div class="t" style="left:110.3px;top:1605.2px;font-size:24px;line-height:24px;color:#a4b1be;">0.00B</div>
<div class="t" style="left:1650.8px;top:1176.0px;font-size:24px;line-height:24px;color:#a4b1be;">0.46</div>
<div class="t" style="left:1650.8px;top:1283.4px;font-size:24px;line-height:24px;color:#a4b1be;">0.35</div>
<div class="t" style="left:1650.8px;top:1389.8px;font-size:24px;line-height:24px;color:#a4b1be;">0.23</div>
<div class="t" style="left:1650.8px;top:1497.6px;font-size:24px;line-height:24px;color:#a4b1be;">0.12</div>
<div class="t" style="left:1650.8px;top:1605.2px;font-size:24px;line-height:24px;color:#a4b1be;">0.00</div>
<div class="t" style="left:251.2px;top:972.3px;font-size:24px;line-height:24px;color:#a4b1be;">11:42:00</div>
<div class="t" style="left:1775.2px;top:972.3px;font-size:24px;line-height:24px;color:#a4b1be;">11:42:00</div>
<div class="t" style="left:443.5px;top:972.3px;font-size:24px;line-height:24px;color:#a4b1be;">11:44:00</div>
<div class="t" style="left:1967.5px;top:972.3px;font-size:24px;line-height:24px;color:#a4b1be;">11:44:00</div>
<div class="t" style="left:635.8px;top:972.3px;font-size:24px;line-height:24px;color:#a4b1be;">11:46:00</div>
<div class="t" style="left:2159.8px;top:972.3px;font-size:24px;line-height:24px;color:#a4b1be;">11:46:00</div>
<div class="t" style="left:828.1px;top:972.3px;font-size:24px;line-height:24px;color:#a4b1be;">11:48:00</div>
<div class="t" style="left:2352.1px;top:972.3px;font-size:24px;line-height:24px;color:#a4b1be;">11:48:00</div>
<div class="t" style="left:1020.4px;top:972.3px;font-size:24px;line-height:24px;color:#a4b1be;">11:50:00</div>
<div class="t" style="left:2544.4px;top:972.3px;font-size:24px;line-height:24px;color:#a4b1be;">11:50:00</div>
<div class="t" style="left:1212.7px;top:972.3px;font-size:24px;line-height:24px;color:#a4b1be;">11:52:00</div>
<div class="t" style="left:2736.7px;top:972.3px;font-size:24px;line-height:24px;color:#a4b1be;">11:52:00</div>
<div class="t" style="left:446.0px;top:609.6px;font-size:27.5px;line-height:27.5px;color:#848484;transform:scaleX(1.0145);transform-origin:0 0;">2024-10-07 11:53:00</div>
<div class="t" style="left:480.3px;top:651.0px;font-size:28px;line-height:28px;color:#848484;">Average Thruput In (Events): 49.80</div>
<div class="t" style="left:480.3px;top:692.7px;font-size:28px;line-height:28px;color:#848484;">Average Thruput Out (Events): 49.80</div>
<div class="fade"></div>
<svg class="s" width="3072" height="1645" viewBox="0 0 3072 1645"><polygon points="3016.0,1627.0 2982.2,1607.5 2982.2,1568.5 3016.0,1549.0 3049.8,1568.5 3049.8,1607.5" fill="#5ec8c9" stroke="#5ec8c9" stroke-width="7" stroke-linejoin="round"/><path d="M3016 1566 Q3019 1585 3038 1588 Q3019 1591 3016 1610 Q3013 1591 2994 1588 Q3013 1585 3016 1566 Z" fill="#fff"/></svg>
</body></html>
